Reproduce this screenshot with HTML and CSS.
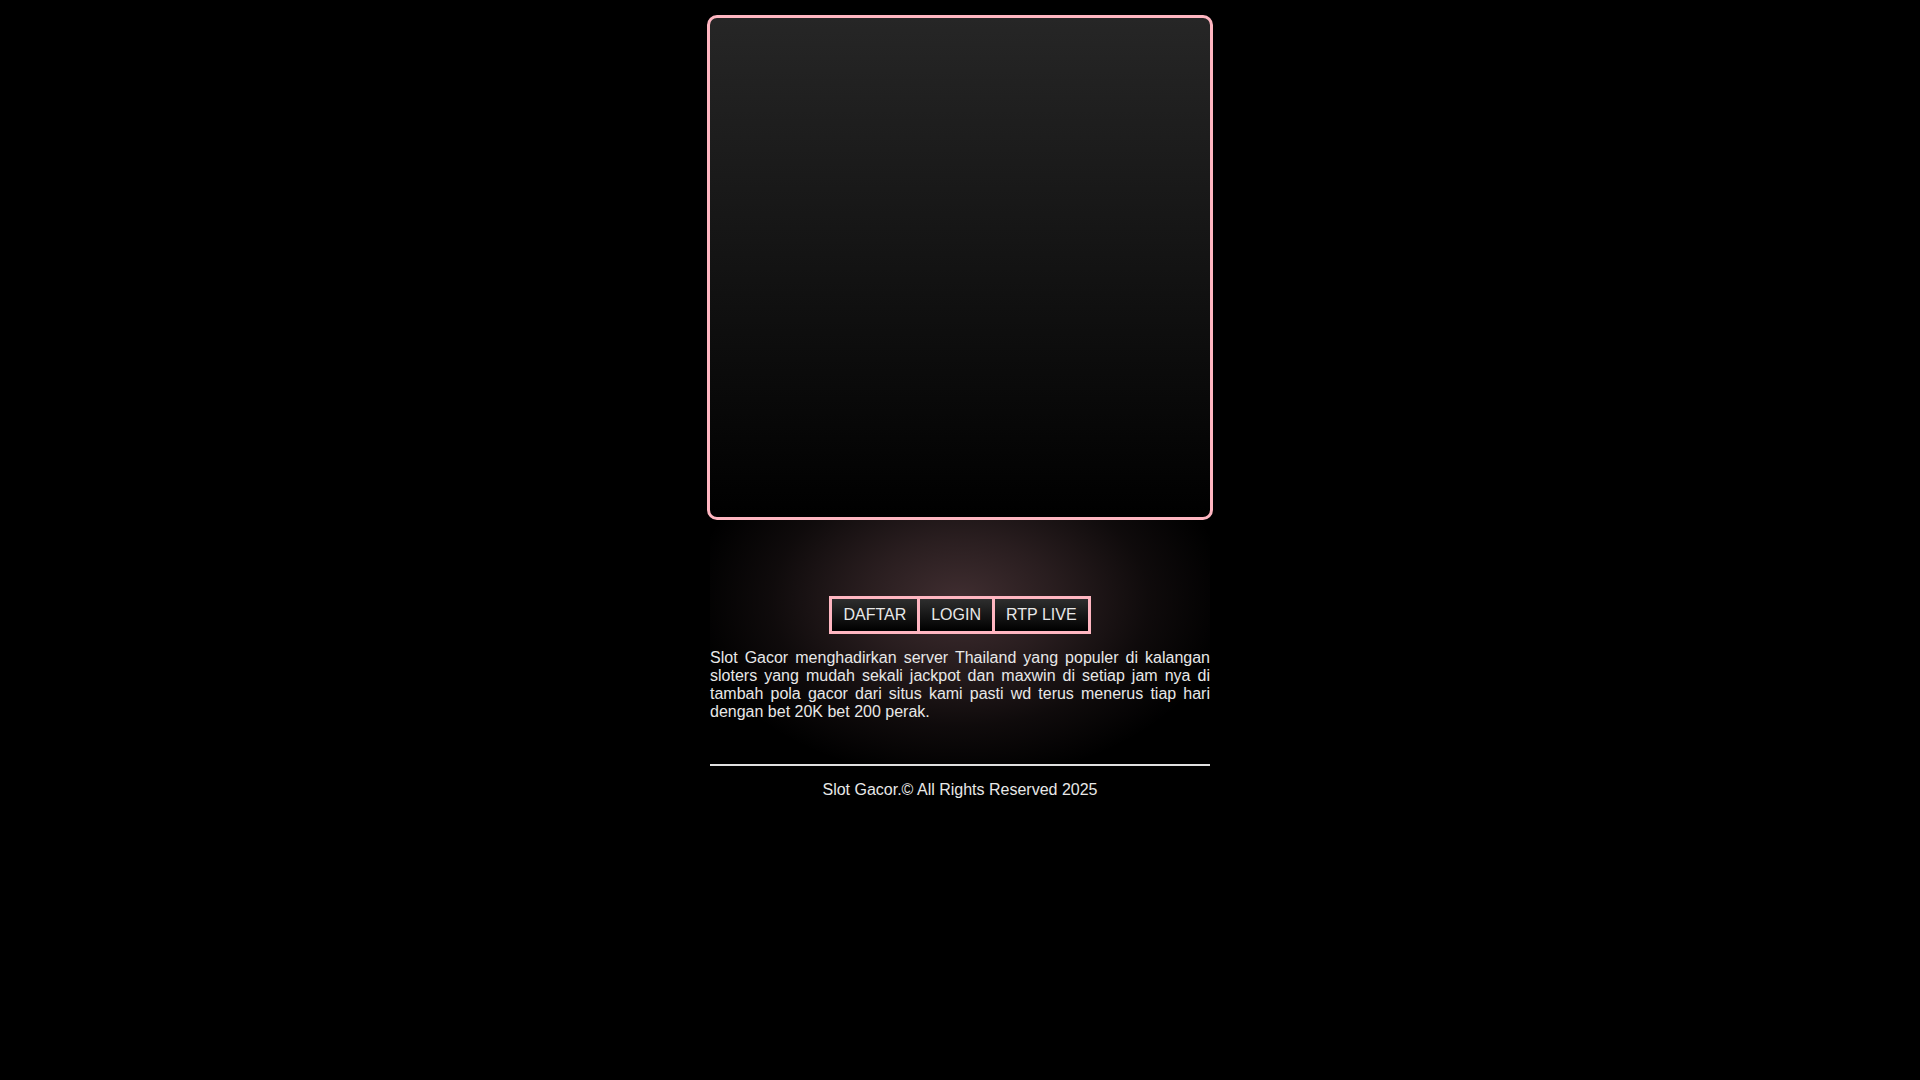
FILE: index.html
```html
<!DOCTYPE html>
<html lang="id">
<head>
<meta charset="utf-8">
<title>Slot Gacor</title>
<link rel="stylesheet" href="styles.css">
</head>
<body>
<div class="wrap">
  <div class="hero"></div>
  <section class="main">
    <nav class="btns">
      <a class="btn" href="#">DAFTAR</a>
      <a class="btn" href="#">LOGIN</a>
      <a class="btn" href="#">RTP LIVE</a>
    </nav>
    <p class="desc">Slot Gacor menghadirkan server Thailand yang populer di kalangan sloters yang mudah sekali jackpot dan maxwin di setiap jam nya di tambah pola gacor dari situs kami pasti wd terus menerus tiap hari dengan bet 20K bet 200 perak.</p>
  </section>
  <footer class="foot">
    <hr class="rule">
    <p class="copy">Slot Gacor.© All Rights Reserved 2025</p>
  </footer>
</div>
</body>
</html>
```

FILE: styles.css
```css
html, body {
  margin: 0;
  padding: 0;
  background: #000;
}
body {
  font-family: "Liberation Sans", Arial, sans-serif;
  font-size: 16px;
  color: #e8e8e8;
}
.wrap {
  width: 500px;
  margin: 0 auto;
  padding-top: 15px;
}
.hero {
  margin: 0 -3px;
  height: 499px;
  border: 3px solid #ffb6c1;
  border-radius: 10px;
  background: linear-gradient(#262626, #000);
}
.main {
  padding-top: 76px;
  padding-bottom: 43px;
  background: radial-gradient(ellipse 270px 180px at 50% 80px,
    rgba(255, 182, 193, 0.25) 0%,
    rgba(255, 182, 193, 0.16) 35%,
    rgba(255, 182, 193, 0.06) 70%,
    rgba(255, 182, 193, 0) 100%);
}
.btns {
  display: flex;
  width: max-content;
  margin: 0 auto;
  gap: 3px;
  padding: 3px;
  background: #ffb6c1;
}
.btn {
  display: block;
  padding: 7px 11px;
  line-height: 18px;
  color: #e8e8e8;
  text-decoration: none;
  background: linear-gradient(#2e2e2e, #000);
}
.desc {
  margin: 15px 0 0;
  text-align: justify;
  line-height: 18px;
}
.foot {
  text-align: center;
}
.rule {
  margin: 0;
  border: 0;
  height: 2px;
  background: #e0e0e0;
}
.copy {
  margin: 15px 0 0;
}
```
